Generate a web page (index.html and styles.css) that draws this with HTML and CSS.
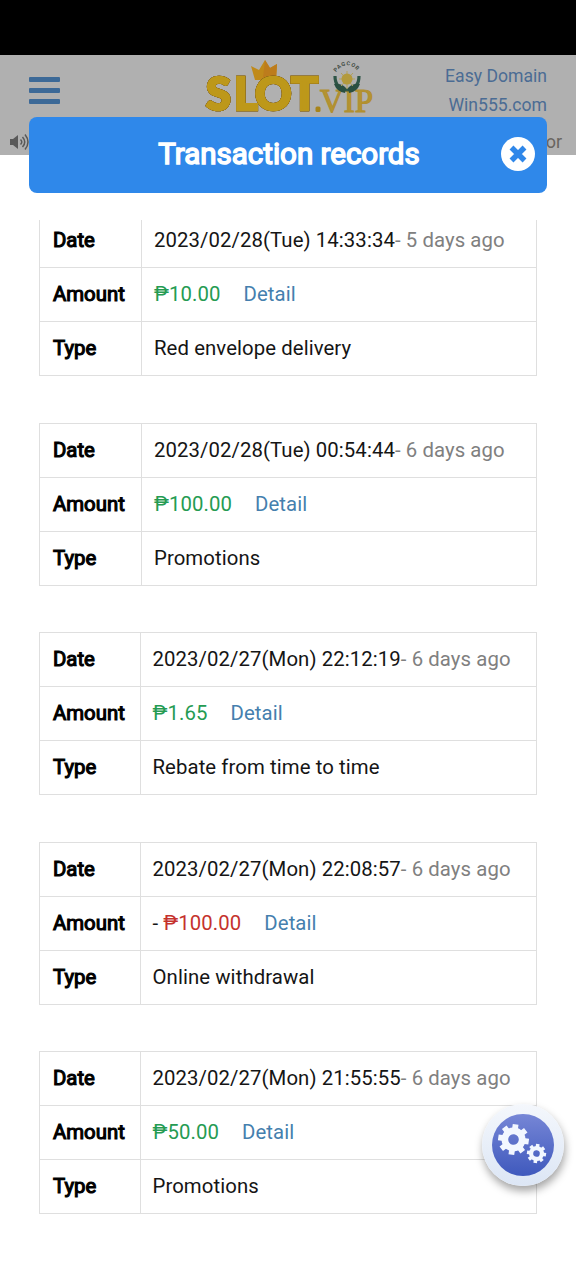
FILE: index.html
```html
<!DOCTYPE html>
<html lang="en">
<head>
<meta charset="utf-8">
<title>Transaction records</title>
<link rel="stylesheet" href="styles.css">
</head>
<body>
<div class="status-bar"></div>
<header class="topbar">
  <div class="topbar-main">
    <div class="menu"><span></span><span></span><span></span></div>
    <svg class="logo" width="180" height="60" viewBox="0 0 180 60">
      <path d="M54 22 L50 8 L58 12 L64 2 L69 10 L76 6 L75 22 Z" fill="#c08a1a"/>
      <path d="M64 2 L69 10 L76 6 L75 22 L62 20 Z" fill="#bd7c1c"/>
      <g class="logo-slot">
        <text x="5 33 54 90" y="52">SLOT</text>
      </g>
      <rect x="114.500" y="48.500" width="5" height="5.500" rx="1.500" fill="#a88419"/>
      <text class="logo-vip" x="119" y="53.500" textLength="53" lengthAdjust="spacingAndGlyphs">VIP</text>
      <g fill="none" stroke="#2e5547" stroke-width="3.200">
        <path d="M134 18 Q134 31 146 32"/><path d="M158 18 Q158 31 146 32"/>
      </g>
      <g fill="#294f41"><path d="M133 26 Q140 25 145 30 L144 35 Q136 34 133 26Z"/><path d="M159 26 Q152 25 147 30 L148 35 Q156 34 159 26Z"/></g>
      <g stroke="#b1a05a" stroke-width="1"><path d="M138 21H154M140 15L152 28M146 13V31M152 15L140 28"/></g>
      <circle cx="146" cy="21" r="5.500" fill="#b39a3c"/>
      <path id="seal-arc" d="M135 14.500 Q146 0 158 14.500" fill="none"/>
      <text class="logo-seal"><textPath href="#seal-arc">PAGCOR</textPath></text>
    </svg>
    <div class="domain"><span>Easy Domain</span><span>Win555.com</span></div>
  </div>
  <div class="notice">
    <svg width="22" height="18" viewBox="0 0 22 18">
      <path d="M1 6H4L9 2V16L4 12H1Z" fill="#595959"/>
      <path d="M11.500 6.500Q14 9 11.500 11.500M13.500 4Q18 9 13.500 14M16 1.500Q22 9 16 16.500" fill="none" stroke="#595959" stroke-width="1.500"/>
    </svg>
    <span>or</span>
  </div>
</header>

<div class="modal-head">
  <h1>Transaction records</h1>
  <svg class="close" width="34" height="34" viewBox="0 0 34 34">
    <circle cx="17" cy="17" r="17" fill="#fff"/>
    <path d="M10.500 10.500L23.500 23.500M23.500 10.500L10.500 23.500" stroke="#2f87e9" stroke-width="5.500"/>
  </svg>
</div>

<main class="records">
  <section class="record">
    <div class="row"><b>Date</b><p><span class="time">2023/02/28(Tue) 14:33:34</span><span class="ago">- 5 days ago</span></p></div>
    <div class="row"><b>Amount</b><p><span class="plus">₱10.00</span><a>Detail</a></p></div>
    <div class="row"><b>Type</b><p>Red envelope delivery</p></div>
  </section>
  <section class="record">
    <div class="row"><b>Date</b><p><span class="time">2023/02/28(Tue) 00:54:44</span><span class="ago">- 6 days ago</span></p></div>
    <div class="row"><b>Amount</b><p><span class="plus">₱100.00</span><a>Detail</a></p></div>
    <div class="row"><b>Type</b><p>Promotions</p></div>
  </section>
  <section class="record narrow">
    <div class="row"><b>Date</b><p><span class="time">2023/02/27(Mon) 22:12:19</span><span class="ago">- 6 days ago</span></p></div>
    <div class="row"><b>Amount</b><p><span class="plus">₱1.65</span><a>Detail</a></p></div>
    <div class="row"><b>Type</b><p>Rebate from time to time</p></div>
  </section>
  <section class="record narrow">
    <div class="row"><b>Date</b><p><span class="time">2023/02/27(Mon) 22:08:57</span><span class="ago">- 6 days ago</span></p></div>
    <div class="row"><b>Amount</b><p><span class="sign">-&nbsp;</span><span class="minus">₱100.00</span><a>Detail</a></p></div>
    <div class="row"><b>Type</b><p>Online withdrawal</p></div>
  </section>
  <section class="record narrow">
    <div class="row"><b>Date</b><p><span class="time">2023/02/27(Mon) 21:55:55</span><span class="ago">- 6 days ago</span></p></div>
    <div class="row"><b>Amount</b><p><span class="plus">₱50.00</span><a>Detail</a></p></div>
    <div class="row"><b>Type</b><p>Promotions</p></div>
  </section>
</main>

<div class="settings">
  <svg width="62" height="62" viewBox="0 0 62 62">
    <defs>
      <linearGradient id="blue" x1="0" y1="0" x2="0" y2="1"><stop offset="0" stop-color="#7686d6"/><stop offset="1" stop-color="#3f59bd"/></linearGradient>
      <g id="gear">
        <circle r="9" fill="none" stroke="#f2f7ff" stroke-width="7"/>
        <g stroke="#f2f7ff" stroke-width="6">
          <path d="M0 -16V-10M0 16V10M-16 0H-10M16 0H10"/>
          <path d="M-11.300 -11.300L-7 -7M11.300 11.300L7 7M-11.300 11.300L-7 7M11.300 -11.300L7 -7"/>
        </g>
      </g>
    </defs>
    <circle cx="31" cy="31" r="31" fill="url(#blue)"/>
    <use href="#gear" transform="translate(21.500 25.500) rotate(8) scale(.96)"/>
    <use href="#gear" transform="translate(44.500 39.500) rotate(8) scale(.6)"/>
  </svg>
</div>
</body>
</html>
```
FILE: styles.css
```css
* { box-sizing: border-box; }
body {
  margin: 0;
  height: 1280px;
  overflow: hidden;
  position: relative;
  background: #fff;
  color: #151515;
  font: 20.350px/24px Roboto, sans-serif;
}
.status-bar { height: 55px; background: #000; }
.topbar { height: 100px; background: #b0b0b0; }
.topbar-main {
  display: flex;
  height: 76px;
  padding: 0 29px;
}
.menu {
  display: flex;
  flex-direction: column;
  gap: 6px;
  width: 31px;
  padding-top: 21.500px;
}
.menu span { height: 5px; border-radius: 1px; background: #3c6997; }
.logo { margin: 3px 0 0 141px; overflow: visible; }
.logo-slot {
  font: 900 45px Lato, sans-serif;
  fill: #bd981a;
  stroke: #bd981a;
  stroke-width: 2.600px;
  filter: drop-shadow(0 0 .6px #6b4a18) drop-shadow(0 0 .4px #6b4a18);
}
.logo-vip {
  font: 400 34px "Liberation Serif", serif;
  fill: #b59431;
  stroke: #b08f30;
  stroke-width: 1.200px;
}
.logo-seal { font: 700 5.500px Roboto, sans-serif; fill: #414b43; letter-spacing: .8px; }
.domain {
  display: flex;
  flex-direction: column;
  flex: 1;
  align-items: flex-end;
  padding-top: 7px;
  color: #4b6c94;
  font-size: 17.600px;
  line-height: 29px;
  white-space: nowrap;
}
.notice {
  display: flex;
  justify-content: space-between;
  align-items: center;
  height: 22px;
  padding: 0 14px 0 9px;
  color: #696560;
  font-size: 18px;
}
.modal-head {
  position: absolute;
  left: 29px;
  top: 117px;
  width: 518px;
  height: 76px;
  display: grid;
  place-items: center;
  border-radius: 8px;
  background: #2f88ea;
}
.modal-head h1 {
  margin: 0 0 2px 2px;
  color: #fff;
  font-size: 29.500px;
  font-weight: 400;
  line-height: 34px;
  -webkit-text-stroke: 1.500px #fff;
}
.close { position: absolute; right: 12px; top: 20px; }
.records {
  display: flex;
  flex-direction: column;
  gap: 46.600px;
  margin-top: 65px;
  height: 1060px;
  padding: 0 39px;
  overflow: hidden;
}
.record {
  flex: none;
  width: 498px;
  height: 163px;
  border: 1px solid #dfdfdf;
  border-top: 0;
}
.record:first-child { margin-top: -7px; }
.row {
  display: grid;
  grid-template-columns: 102px 1fr;
  height: 54px;
  border-top: 1px solid #dfdfdf;
}
.narrow .row { grid-template-columns: 100.500px 1fr; }
.row b {
  padding: 14px 0 0 13px;
  border-right: 1px solid #dfdfdf;
  color: #000;
  font-weight: 400;
  -webkit-text-stroke: 1.100px #000;
}
.row p { margin: 0; padding: 14px 0 0 12px; letter-spacing: .08px; white-space: nowrap; }
.ago { color: #808080; }
.plus { color: #259b52; }
.minus { color: #c5322d; }
.row a { margin-left: 23px; color: #457fae; }
.settings {
  position: absolute;
  left: 482px;
  top: 1104px;
  width: 82px;
  height: 82px;
  padding: 10px;
  border-radius: 50%;
  background: linear-gradient(#f4f7fc, #dce6f5);
  box-shadow: 1px 5px 8px rgba(0, 0, 0, .36);
}
.settings svg { display: block; }
```
